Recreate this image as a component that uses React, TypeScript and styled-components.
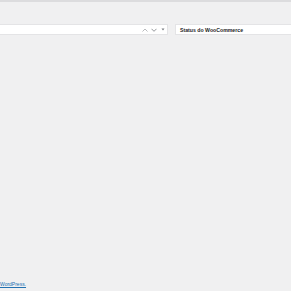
import React from "react";
import styled, { createGlobalStyle } from "styled-components";

const GlobalStyle = createGlobalStyle`
	html, body {
		margin: 0;
		padding: 0;
		background: #f0f0f1;
		font-family: "Liberation Sans", Arial, sans-serif;
	}
`;

const Page = styled.div`
	display: flex;
	flex-direction: column;
	min-height: 291px;
	overflow: hidden;
`;

const TopStrip = styled.div`
	height: 2px;
	background: #dcdcde;
`;

const Widgets = styled.div`
	display: flex;
	gap: 7px;
	margin-top: 22px;
`;

const Postbox = styled.div<{ $width?: number }>`
	flex: ${(p) => (p.$width ? `0 0 ${p.$width}px` : "1")};
	height: 11px;
	background: #fff;
	border: 1px solid #e4e4e6;
	border-right: ${(p) => (p.$width ? "1px solid #e4e4e6" : "none")};
	border-left: ${(p) => (p.$width ? "none" : "1px solid #e4e4e6")};
	display: flex;
	align-items: center;
	box-sizing: border-box;
`;

const Title = styled.h2`
	margin: 0 0 0 4px;
	font-size: 5.2px;
	font-weight: 700;
	color: #1d2327;
	white-space: nowrap;
`;

const Handles = styled.div`
	margin-left: auto;
	display: flex;
	align-items: center;
	gap: 3px;
	padding-right: 1px;
`;

const Handle = styled.span`
	display: flex;
	width: 6px;
	height: 6px;
	align-items: center;
	justify-content: center;
`;

const Footer = styled.div`
	margin-top: auto;
	padding-bottom: 4px;
	font-size: 5px;
`;

const Link = styled.a`
	color: #2271b1;
	text-decoration: underline;
`;

const App = () => {
	return (
		<Page>
			<GlobalStyle />
			<TopStrip />
			<Widgets>
				<Postbox $width={168}>
					<Handles>
						<Handle>
							<svg width="6" height="4" viewBox="0 0 6 4">
								<path d="M0.5 3.5 L3 1 L5.5 3.5" fill="none" stroke="#a7aaad" strokeWidth="0.8" />
							</svg>
						</Handle>
						<Handle>
							<svg width="6" height="4" viewBox="0 0 6 4">
								<path d="M0.5 0.8 L3 3.3 L5.5 0.8" fill="none" stroke="#787c82" strokeWidth="0.8" />
							</svg>
						</Handle>
						<Handle>
							<svg width="4" height="3" viewBox="0 0 4 3">
								<path d="M0.5 0.5 L3.5 0.5 L2 2.5 Z" fill="#787c82" />
							</svg>
						</Handle>
					</Handles>
				</Postbox>
				<Postbox>
					<Title>Status do WooCommerce</Title>
				</Postbox>
			</Widgets>
			<Footer>
				<Link href="#">WordPress.</Link>
			</Footer>
		</Page>
	);
};

export default App;
